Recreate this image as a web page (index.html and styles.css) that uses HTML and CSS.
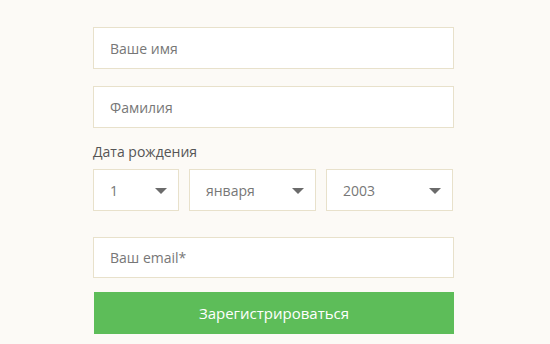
FILE: index.html
```html
<!DOCTYPE html>
<html lang="ru">
  <head>
    <meta charset="UTF-8" />
    <meta name="viewport" content="width=device-width, initial-scale=1.0" />
    <title>Регистрация</title>
    <link rel="stylesheet" href="styles.css">
  </head>
  <body>
    <form class="register">
      <input type="text" class="field" placeholder="Ваше имя" />
      <input type="text" class="field" placeholder="Фамилия" />

      <div class="birth-label">Дата рождения</div>
      <div class="birth-row">
        <div class="select day">
          <select>
            <option>1</option>
          </select>
          <svg class="arrow" width="12" height="6" viewBox="0 0 12 6"><path d="M0 0h12L6 6z" fill="#6b6b6b"/></svg>
        </div>
        <div class="select month">
          <select>
            <option>января</option>
          </select>
          <svg class="arrow" width="12" height="6" viewBox="0 0 12 6"><path d="M0 0h12L6 6z" fill="#6b6b6b"/></svg>
        </div>
        <div class="select year">
          <select>
            <option>2003</option>
          </select>
          <svg class="arrow" width="12" height="6" viewBox="0 0 12 6"><path d="M0 0h12L6 6z" fill="#6b6b6b"/></svg>
        </div>
      </div>

      <input type="email" class="field email" placeholder="Ваш email*" />
      <button type="button" class="submit">Зарегистрироваться</button>
    </form>
  </body>
</html>
```

FILE: styles.css
```css
body {
  margin: 0;
  padding-top: 27px;
  background-color: #fcfaf6;
  font-family: "Open Sans", Arial, sans-serif;
  font-size: 14px;
  color: #555;
}

.register {
  display: flex;
  flex-direction: column;
  width: 361px;
  margin-left: 93px;
}

.field {
  display: block;
  box-sizing: border-box;
  width: 100%;
  height: 42px;
  margin: 0 0 17px;
  padding: 0 16px;
  border: 1px solid #e8e1cb;
  border-radius: 0;
  background: #fff;
  font-family: inherit;
  font-size: 14px;
  color: #555;
  outline: none;
}

.field::placeholder {
  color: #777;
}

.birth-label {
  margin-top: -3px;
  line-height: 20px;
  color: #555;
}

.birth-row {
  display: flex;
  gap: 10px;
  margin-top: 7px;
}

.select {
  position: relative;
  box-sizing: border-box;
  height: 42px;
  border: 1px solid #e8e1cb;
  background: #fff;
}

.select.day {
  width: 86px;
}

.select.month,
.select.year {
  width: 127px;
}

.select select {
  appearance: none;
  -webkit-appearance: none;
  width: 100%;
  height: 100%;
  padding: 0 16px;
  border: none;
  background: transparent;
  font-family: inherit;
  font-size: 14px;
  color: #777;
  outline: none;
}

.select .arrow {
  position: absolute;
  right: 11px;
  top: 18px;
  pointer-events: none;
}

.field.email {
  margin-top: 26px;
  height: 41px;
  margin-bottom: 14px;
}

.submit {
  display: block;
  width: 360px;
  height: 42px;
  margin-left: 1px;
  border: none;
  background-color: #5dbd59;
  color: #fff;
  font-family: inherit;
  font-size: 15px;
  cursor: pointer;
}
```
